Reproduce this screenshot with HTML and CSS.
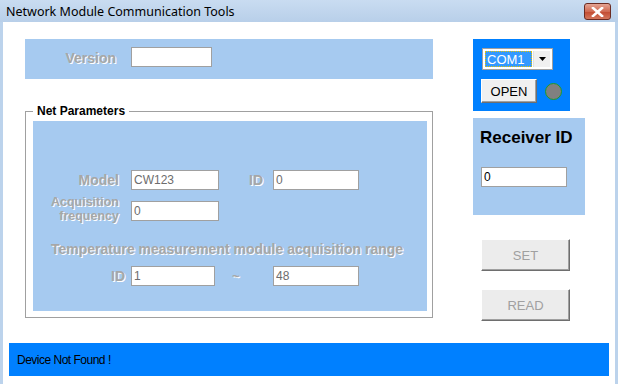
FILE: index.html
```html
<!DOCTYPE html>
<html lang="en">

<head>
    <meta charset="UTF-8">
    <meta name="viewport" content="width=device-width, initial-scale=1.0">
    <title>Network Module Communication Tools</title>
    <link rel="stylesheet" href="styles.css">
</head>

<body>
    <div class="window">
        <div class="titlebar">
            <span class="title">Network Module Communication Tools</span>
            <button class="close-btn">
                <svg width="13" height="10" viewBox="0 0 13 10">
                    <path d="M2 1 L11 9 M11 1 L2 9" stroke="#fff" stroke-width="2.6" stroke-linecap="square" />
                </svg>
            </button>
        </div>

        <div class="client">
            <div class="main">
                <div class="left-col">
                    <div class="panel version-panel">
                        <span class="label">Version</span>
                        <input type="text" class="field version-field">
                    </div>

                    <fieldset class="groupbox">
                        <legend>Net Parameters</legend>
                        <div class="panel params-panel">
                            <div class="row">
                                <span class="label row-label">Model</span>
                                <input type="text" class="field field-wide" value="CW123">
                                <span class="label id-label">ID</span>
                                <input type="text" class="field field-right" value="0">
                            </div>
                            <div class="row row-top">
                                <span class="label row-label two-line">Acquisition<br>frequency</span>
                                <input type="text" class="field field-wide" value="0">
                            </div>
                            <div class="label range-title">Temperature measurement module acquisition range</div>
                            <div class="row">
                                <span class="label range-id">ID</span>
                                <input type="text" class="field field-from" value="1">
                                <span class="label tilde">~</span>
                                <input type="text" class="field field-right" value="48">
                            </div>
                        </div>
                    </fieldset>
                </div>

                <div class="right-col">
                    <div class="com-panel">
                        <div class="combo">
                            <span class="combo-text"><span class="combo-sel">COM1</span></span>
                            <span class="combo-btn">
                                <svg width="7" height="4" viewBox="0 0 7 4">
                                    <path d="M0 0 H7 L3.5 4 Z" fill="#000" />
                                </svg>
                            </span>
                        </div>
                        <div class="open-row">
                            <button class="btn open-btn">OPEN</button>
                            <span class="led"></span>
                        </div>
                    </div>

                    <div class="panel receiver-panel">
                        <div class="receiver-title">Receiver ID</div>
                        <input type="text" class="field receiver-field" value="0">
                    </div>

                    <button class="btn action-btn" disabled>SET</button>
                    <button class="btn action-btn read-btn" disabled>READ</button>
                </div>
            </div>

            <div class="status">Device Not Found !</div>
        </div>
    </div>
</body>

</html>
```

FILE: styles.css
```css
body {
    margin: 0;
    font-family: "Liberation Sans", Arial, sans-serif;
    background: #fff;
}

.window {
    width: 618px;
    height: 384px;
    display: flex;
    flex-direction: column;
    background: #bcd3ec;
    overflow: hidden;
}

.titlebar {
    height: 22px;
    display: flex;
    align-items: center;
    justify-content: space-between;
    padding: 0 7px 0 6px;
    background: linear-gradient(#c9dcf1, #b8cfe9);
}

.title {
    font-family: "Noto Sans", sans-serif;
    font-size: 12.5px;
    color: #000;
}

.close-btn {
    width: 27px;
    height: 17px;
    margin-top: 1px;
    padding: 0;
    display: flex;
    align-items: center;
    justify-content: center;
    border: 1px solid #6b2b22;
    border-radius: 3px;
    background: linear-gradient(#e4a494, #d06a52 50%, #c24a30 51%, #d3765c);
}

.client {
    flex: 1;
    margin: 0 3px;
    background: #fff;
    display: flex;
    flex-direction: column;
}

.main {
    display: flex;
    padding: 17px 0 0 22px;
    gap: 40px;
}

.left-col {
    width: 408px;
}

.panel {
    background: #a6caf0;
}

.label {
    font-size: 14px;
    font-weight: bold;
    color: #a7a7a7;
    text-shadow: 1px 1px 0 #fff;
}

.field {
    box-sizing: border-box;
    height: 20px;
    margin: 0;
    padding: 0 2px;
    border: 1px solid #a0a0a0;
    background: #fff;
    font-family: "Liberation Sans", Arial, sans-serif;
    font-size: 12px;
    color: #6d6d6d;
    outline: none;
}

.version-panel {
    height: 40px;
    display: flex;
    align-items: flex-start;
}

.version-panel .label {
    width: 91px;
    text-align: right;
    margin-top: 11px;
}

.version-field {
    width: 81px;
    margin: 8px 0 0 15px;
}

.groupbox {
    box-sizing: border-box;
    width: 408px;
    margin: 25px 0 0;
    padding: 3px 5px 6px 7px;
    border: 1px solid #a0a0a0;
    min-width: 0;
}

.groupbox legend {
    padding: 0 4px;
    font-size: 12px;
    font-weight: bold;
    line-height: 14px;
    color: #000;
}

.params-panel {
    height: 190px;
    box-sizing: border-box;
    padding-top: 49px;
}

.row {
    display: flex;
    align-items: center;
    margin-bottom: 11px;
}

.row-top {
    align-items: flex-start;
    margin-bottom: 0;
}

.row-label {
    width: 86px;
    text-align: right;
    margin-right: 12px;
}

.two-line {
    font-size: 12.5px;
    line-height: 14px;
    margin-top: -6px;
}

.field-wide {
    width: 88px;
}

.id-label {
    width: 44px;
    text-align: right;
    margin-right: 10px;
}

.field-right {
    width: 86px;
}

.range-title {
    text-align: center;
    line-height: 16px;
    margin: 18px 0 9px -6px;
}

.range-id {
    width: 92px;
    text-align: right;
    margin-right: 6px;
}

.field-from {
    width: 84px;
}

.tilde {
    box-sizing: border-box;
    width: 58px;
    padding-left: 17px;
    font-size: 13px;
}

.right-col {
    width: 112px;
    display: flex;
    flex-direction: column;
    align-items: flex-start;
}

.com-panel {
    box-sizing: border-box;
    width: 97px;
    height: 72px;
    padding: 9px 0 0 8px;
    background: #0080ff;
}

.combo {
    box-sizing: border-box;
    width: 71px;
    height: 22px;
    margin-left: 1px;
    display: flex;
    padding: 2px;
    border: 1px solid #a0a0a0;
    background: #fff;
}

.combo-text {
    flex: 1;
    display: flex;
    border: 1px dotted #000;
    outline: 1px dotted #e6c200;
    outline-offset: -1px;
    background: #3399ff;
}

.combo-sel {
    font-size: 13px;
    line-height: 16px;
    color: #fff;
    padding-left: 1px;
}

.combo-btn {
    width: 16px;
    display: flex;
    align-items: center;
    justify-content: center;
    background: #f0f0f0;
    border-left: 1px solid #e0e0e0;
    margin-left: 1px;
}

.open-row {
    display: flex;
    align-items: center;
    margin-top: 9px;
}

.btn {
    box-sizing: border-box;
    margin: 0;
    padding: 0;
    background: #f0f0f0;
    border: 1px solid;
    border-color: #fff #6e6e6e #6e6e6e #fff;
    box-shadow: inset -1px -1px 0 #a0a0a0;
    font-family: "Liberation Sans", Arial, sans-serif;
    font-size: 13px;
    color: #000;
}

.open-btn {
    width: 56px;
    height: 24px;
}

.led {
    box-sizing: border-box;
    width: 17px;
    height: 17px;
    margin-left: 8px;
    border-radius: 50%;
    border: 1px solid #1f9a2a;
    background: #808080;
}

.receiver-panel {
    box-sizing: border-box;
    width: 112px;
    height: 97px;
    margin-top: 7px;
    padding: 8px 0 0 7px;
}

.receiver-title {
    font-size: 17px;
    font-weight: bold;
    line-height: 24px;
    color: #000;
}

.receiver-field {
    width: 86px;
    margin: 17px 0 0 1px;
    color: #000;
}

.action-btn {
    width: 89px;
    height: 32px;
    margin: 24px 0 0 8px;
    background: #ececec;
    color: #a0a0a0;
}

.read-btn {
    margin-top: 18px;
}

.status {
    box-sizing: border-box;
    height: 33px;
    margin: 22px 6px 0;
    padding-left: 8px;
    display: flex;
    align-items: center;
    background: #0080ff;
    font-size: 12px;
    letter-spacing: -0.5px;
    color: #000;
}
```
